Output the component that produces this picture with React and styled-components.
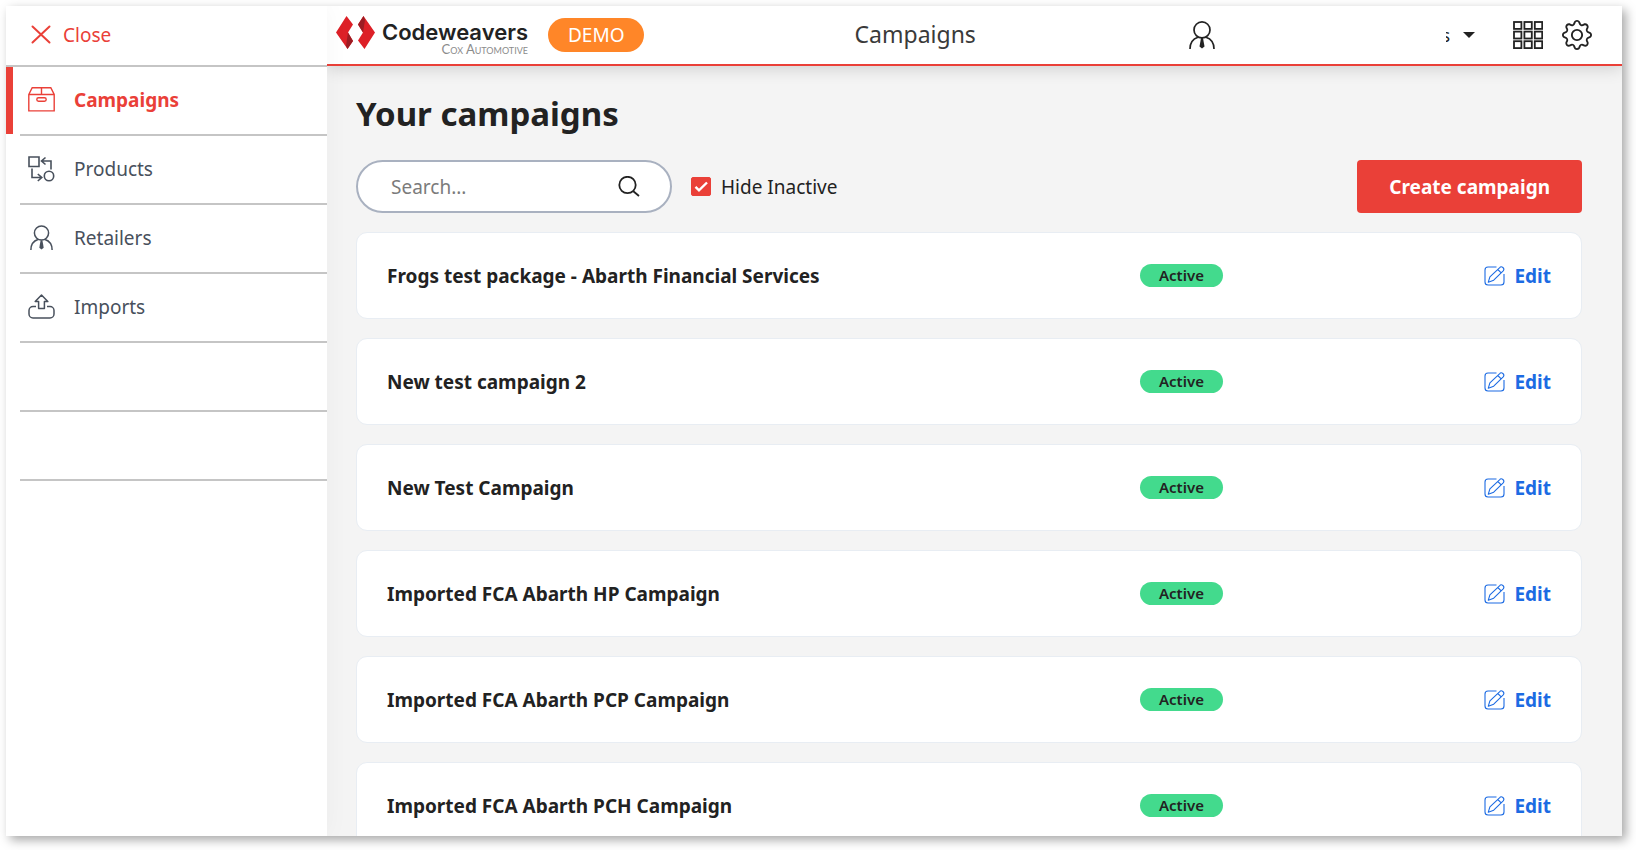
import React, { useState } from 'react';
import styled, { createGlobalStyle } from 'styled-components';
import { BsGear } from 'react-icons/bs';

const GlobalStyle = createGlobalStyle`
  * {
    box-sizing: border-box;
  }
  body {
    margin: 0;
    background: #fff;
    color: #222;
    font-family: 'Noto Sans', 'Open Sans', sans-serif;
    font-size: 19px;
    line-height: 24px;
  }
  button, input {
    font: inherit;
  }
`;

const Page = styled.div`
  height: 100vh;
  padding: 6px 14px 14px 6px;
`;

const Shell = styled.div`
  display: flex;
  height: 100%;
  overflow: hidden;
  background: #f4f4f4;
`;

const Frame = styled.div`
  height: 100%;
  box-shadow: 4px 4px 10px rgba(0, 0, 0, 0.35);
`;

const Sidebar = styled.aside`
  flex: 0 0 321px;
  z-index: 1;
  background: #fff;
  box-shadow: 0 0 24px rgba(0, 0, 0, 0.04);
`;

const CloseButton = styled.button`
  display: flex;
  align-items: center;
  gap: 12px;
  width: 100%;
  height: 61px;
  padding: 0 25px 2px;
  border: 0;
  border-bottom: 2px solid #c5c5c5;
  background: none;
  color: #ea4038;
  cursor: pointer;
`;

const NavList = styled.ul`
  margin: 0;
  padding: 0;
  list-style: none;
`;

const NavItem = styled.li`
  height: 69px;
  padding-left: ${({ $active }) => ($active ? '0' : '14px')};
  display: flex;
`;

const ActiveBar = styled.span`
  width: 7px;
  height: 67px;
  margin-right: 7px;
  background: #ea4038;
`;

const NavLink = styled.a`
  flex: 1;
  display: flex;
  align-items: center;
  gap: 19px;
  padding: 0 0 2px 8px;
  border-bottom: 2px solid #c5c5c5;
  color: ${({ $active }) => ($active ? '#ea4038' : '#48505c')};
  font-weight: ${({ $active }) => ($active ? 700 : 400)};
  text-decoration: none;
`;

const NavIcon = styled.span`
  display: flex;
  justify-content: center;
  width: 27px;
`;

const Content = styled.div`
  flex: 1;
  min-width: 0;
  display: flex;
  flex-direction: column;
`;

const Header = styled.header`
  display: grid;
  grid-template-columns: 528fr 335fr 433fr;
  align-items: center;
  flex: none;
  height: 60px;
  border-bottom: 2px solid #ea4038;
  background: #fff;
  box-shadow: 0 2px 16px rgba(0, 0, 0, 0.16);
`;

const Brand = styled.div`
  display: flex;
  align-items: center;
  padding-left: 9px;
  svg {
    margin-bottom: 5px;
  }
`;

const BrandName = styled.div`
  display: flex;
  flex-direction: column;
  align-items: flex-end;
  margin: 7px 20px 0 7px;
  font-family: Inter, 'Noto Sans', sans-serif;
  font-size: 22px;
  font-weight: 600;
  line-height: 22px;
`;

const BrandOwner = styled.small`
  color: #8b8b8b;
  font-family: Lato, sans-serif;
  font-size: 13px;
  font-weight: 400;
  font-variant: small-caps;
  line-height: 13px;
`;

const DemoBadge = styled.span`
  padding: 5px 20px;
  border-radius: 17px;
  background: #ff8628;
  color: #fff;
`;

const HeaderTitle = styled.div`
  padding-bottom: 2px;
  color: #3a3a3a;
  font-size: 23px;
  line-height: 30px;
`;

const IconButton = styled.button`
  display: flex;
  padding: 0;
  border: 0;
  background: none;
  color: #222;
  cursor: pointer;
`;

const Tools = styled.div`
  display: flex;
  align-items: center;
  justify-content: space-between;
  padding-right: 30px;
`;

const ToolGroup = styled.div`
  display: flex;
  align-items: center;
  gap: 19px;
`;

const Account = styled(IconButton)`
  align-items: center;
  gap: 13px;
  margin-right: 19px;
`;

const AccountName = styled.span`
  display: flex;
  justify-content: flex-end;
  width: 4px;
  overflow: hidden;
  font-size: 18px;
`;

const Main = styled.main`
  flex: 1;
  min-height: 0;
  padding: 26px 40px 0 29px;
`;

const Heading = styled.h1`
  margin: 0 0 24px;
  font-size: 33px;
  line-height: 44px;
`;

const Toolbar = styled.div`
  display: flex;
  align-items: center;
  margin-bottom: 19px;
`;

const SearchBox = styled.form`
  display: flex;
  align-items: center;
  width: 316px;
  height: 53px;
  margin-right: 19px;
  padding: 0 30px 0 33px;
  border: 2px solid #a9b1c0;
  border-radius: 27px;
  background: #fff;
`;

const SearchInput = styled.input`
  flex: 1;
  min-width: 0;
  padding: 0;
  border: 0;
  outline: 0;
  background: none;
  color: #222;
  &::placeholder {
    color: #7b7b7b;
    opacity: 1;
  }
`;

const CheckLabel = styled.label`
  display: flex;
  align-items: center;
  gap: 10px;
  cursor: pointer;
`;

const CheckBox = styled.span`
  display: grid;
  > * {
    grid-area: 1 / 1;
  }
  input {
    appearance: none;
    width: 20px;
    height: 19px;
    margin: 0;
    border: 1px solid #ea4038;
    border-radius: 2px;
    background: #fff;
  }
  input:checked {
    background: #ea4038;
  }
  svg {
    pointer-events: none;
  }
`;

const CreateButton = styled.button`
  height: 53px;
  margin-left: auto;
  padding: 0 32px;
  border: 0;
  border-radius: 4px;
  background: #ea4038;
  color: #fff;
  font-weight: 700;
  cursor: pointer;
`;

const CampaignList = styled.ul`
  display: flex;
  flex-direction: column;
  gap: 19px;
  margin: 0;
  padding: 0;
  list-style: none;
`;

const Card = styled.li`
  display: grid;
  grid-template-columns: 753fr 411fr;
  align-items: center;
  height: 87px;
  padding: 0 30px;
  border: 1px solid #e8edf3;
  border-radius: 11px;
  background: #fff;
`;

const CampaignName = styled.span`
  font-weight: 700;
`;

const CardEnd = styled.div`
  display: flex;
  align-items: center;
  justify-content: space-between;
`;

const Status = styled.span`
  padding: 0 19px;
  border-radius: 12px;
  background: #43da8d;
  font-size: 15px;
  font-weight: 600;
  line-height: 23px;
`;

const EditLink = styled.a`
  display: flex;
  align-items: center;
  gap: 9px;
  color: #1c6be3;
  font-weight: 700;
  text-decoration: none;
`;

const CloseIcon = () => (
  <svg width="20" height="19" viewBox="0 0 20 19" fill="none" stroke="currentColor" strokeWidth="2" strokeLinecap="round">
    <path d="M1.5 1.5l17 16M18.5 1.5l-17 16" />
  </svg>
);

const BoxIcon = () => (
  <svg width="27" height="25" viewBox="0 0 27 25" fill="none" stroke="currentColor" strokeWidth="1.4">
    <path d="M.8 7.5L4.2.8h18.6l3.4 6.7v16.4H.8zM.8 7.5h25.4M13.5.8v6.7" />
    <rect x="8.8" y="10.8" width="9.4" height="3.4" rx="1.7" />
  </svg>
);

const ProductsIcon = () => (
  <svg width="27" height="26" viewBox="0 0 27 26" fill="none" stroke="currentColor" strokeWidth="1.6">
    <path d="M1 1h10v9.5H1zM23 13.5V5h-9M17.5 1.5L13.5 5l4 3.5M4 12.5v9h9M9.8 18l4 3.5-4 3.5" />
    <circle cx="21" cy="20" r="4.7" />
  </svg>
);

const PersonIcon = ({ width = 23, height = 25 }) => (
  <svg width={width} height={height} viewBox="0 0 26 28" fill="none" stroke="currentColor" strokeWidth="1.7">
    <circle cx="13" cy="8.9" r="8" />
    <path d="M1 28C1 22 4 17.8 9 16.2M25 28C25 22 22 17.8 17 16.2" />
    <path d="M12 17h2l1.5 8.500L13 27.600l-2.500-2.100z" fill="currentColor" stroke="none" />
  </svg>
);

const ImportIcon = () => (
  <svg width="27" height="25" viewBox="0 0 27 25" fill="none" stroke="currentColor" strokeWidth="1.5">
    <path d="M8 12.5H5a4 4 0 0 0-4 4V20a4 4 0 0 0 4 4h17a4 4 0 0 0 4-4v-3.5a4 4 0 0 0-4-4h-3" />
    <path d="M13.5 1l6.3 6.6h-3.4v7h-5.8v-7H7.200z" strokeLinejoin="round" />
  </svg>
);

const LogoMark = () => (
  <svg width="39" height="33" viewBox="0 0 39 33">
    <path d="M10.5 0L17 8.5l-5 8L17 25l-5.5 8L0 16.5z" fill="#dd2027" />
    <path d="M12 16.5L17 25l-5.5 8L10 30z" fill="#9c1c23" />
    <path d="M27.5 0L39 16.5 28.5 33 22 24.500l5-8-5-8z" fill="#dd2027" />
    <path d="M27.5 0L22 8.5l5 8L29 4z" fill="#9c1c23" />
  </svg>
);

const GridIcon = () => (
  <svg width="30" height="28" viewBox="0 0 30 28" fill="none" stroke="currentColor" strokeWidth="1.8">
    {[0, 1, 2].map((row) =>
      [0, 1, 2].map((col) => (
        <rect key={`${row}${col}`} x={1 + col * 10.4} y={1 + row * 9.6} width="7.4" height="6.9" />
      ))
    )}
  </svg>
);

const CaretIcon = () => (
  <svg width="12" height="6" viewBox="0 0 12 6">
    <path d="M0 0h12L6 6z" fill="currentColor" />
  </svg>
);

const SearchIcon = () => (
  <svg width="22" height="21" viewBox="0 0 22 21" fill="none" stroke="currentColor" strokeWidth="1.8">
    <circle cx="9.5" cy="9" r="8.2" />
    <path d="M15 15l6 5" />
  </svg>
);

const EditIcon = () => (
  <svg width="21" height="20" viewBox="0 0 21 20" fill="none" stroke="currentColor" strokeWidth="1.1">
    <path d="M12.5 1H4a3 3 0 0 0-3 3v12a3 3 0 0 0 3 3h13a3 3 0 0 0 3-3V8" />
    <path d="M4.3 16.2l1.6-5.3L15.5 1.8a2.3 2.3 0 0 1 3.7 3L9.7 14.200zM13.8 3.500l3.4 3.3" strokeLinejoin="round" />
  </svg>
);

const navItems = [
  { label: 'Campaigns', Icon: BoxIcon, active: true },
  { label: 'Products', Icon: ProductsIcon },
  { label: 'Retailers', Icon: PersonIcon },
  { label: 'Imports', Icon: ImportIcon },
  {},
  {},
];

const campaigns = [
  'Frogs test package - Abarth Financial Services',
  'New test campaign 2',
  'New Test Campaign',
  'Imported FCA Abarth HP Campaign',
  'Imported FCA Abarth PCP Campaign',
  'Imported FCA Abarth PCH Campaign',
];

const App = () => {
  const [hideInactive, setHideInactive] = useState(true);
  const [search, setSearch] = useState('');

  const visible = campaigns.filter((name) => name.toLowerCase().includes(search.toLowerCase()));

  return (
    <Page>
      <GlobalStyle />
      <Frame>
        <Shell>
          <Sidebar>
            <CloseButton type="button">
              <CloseIcon />
              Close
            </CloseButton>
            <nav>
              <NavList>
                {navItems.map(({ label, Icon, active }, i) => (
                  <NavItem key={i} $active={active}>
                    {active && <ActiveBar />}
                    <NavLink as={label ? 'a' : 'span'} href={label && '#'} $active={active}>
                      {Icon && <NavIcon><Icon /></NavIcon>}
                      {label}
                    </NavLink>
                  </NavItem>
                ))}
              </NavList>
            </nav>
          </Sidebar>
          <Content>
            <Header>
              <Brand>
                <LogoMark />
                <BrandName>
                  Codeweavers
                  <BrandOwner>Cox Automotive</BrandOwner>
                </BrandName>
                <DemoBadge>DEMO</DemoBadge>
              </Brand>
              <HeaderTitle>Campaigns</HeaderTitle>
              <Tools>
                <IconButton type="button" aria-label="Retailer">
                  <PersonIcon width={26} height={28} />
                </IconButton>
                <ToolGroup>
                  <Account type="button">
                    <AccountName>s</AccountName>
                    <CaretIcon />
                  </Account>
                  <IconButton type="button" aria-label="Apps">
                    <GridIcon />
                  </IconButton>
                  <IconButton type="button" aria-label="Settings">
                    <BsGear size={30} />
                  </IconButton>
                </ToolGroup>
              </Tools>
            </Header>
            <Main>
              <Heading>Your campaigns</Heading>
              <Toolbar>
                <SearchBox onSubmit={(e) => e.preventDefault()}>
                  <SearchInput
                    aria-label="Search"
                    placeholder="Search..."
                    value={search}
                    onChange={(e) => setSearch(e.target.value)}
                  />
                  <IconButton type="submit" aria-label="Search">
                    <SearchIcon />
                  </IconButton>
                </SearchBox>
                <CheckLabel>
                  <CheckBox>
                    <input
                      type="checkbox"
                      checked={hideInactive}
                      onChange={(e) => setHideInactive(e.target.checked)}
                    />
                    <svg width="20" height="19" viewBox="0 0 20 19" fill="none" stroke="#fff" strokeWidth="2.4">
                      <path d="M4.5 9.8l3.5 3.5 8-7.8" />
                    </svg>
                  </CheckBox>
                  Hide Inactive
                </CheckLabel>
                <CreateButton type="button">Create campaign</CreateButton>
              </Toolbar>
              <CampaignList>
                {visible.map((name) => (
                  <Card key={name}>
                    <CampaignName>{name}</CampaignName>
                    <CardEnd>
                      <Status>Active</Status>
                      <EditLink href="#">
                        <EditIcon />
                        Edit
                      </EditLink>
                    </CardEnd>
                  </Card>
                ))}
              </CampaignList>
            </Main>
          </Content>
        </Shell>
      </Frame>
    </Page>
  );
};

export default App;
